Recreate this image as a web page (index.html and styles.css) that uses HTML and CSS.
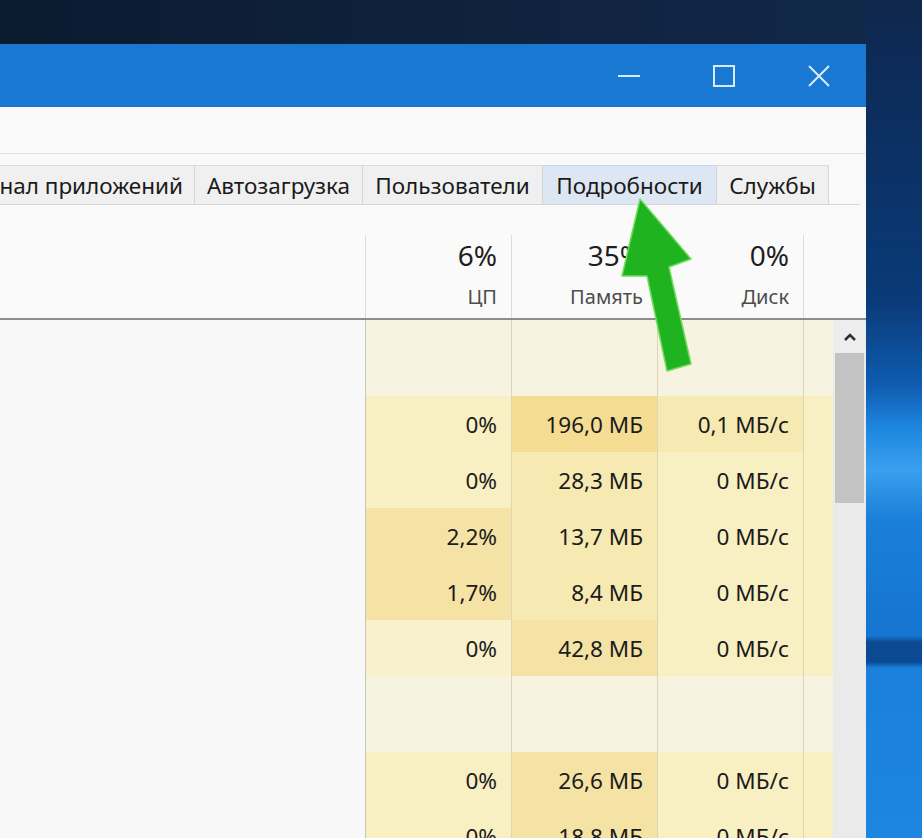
FILE: index.html
```html
<!DOCTYPE html>
<html lang="ru">
<head>
    <meta charset="UTF-8">
    <meta name="viewport" content="width=device-width, initial-scale=1.0">
    <title>Диспетчер задач</title>
    <link rel="stylesheet" href="styles.css">
</head>
<body>
    <div class="desktop">
        <div class="window">
            <div class="titlebar">
                <span class="ctl">
                    <svg width="24" height="24" viewBox="0 0 24 24"><line x1="1" y1="12" x2="23" y2="12"/></svg>
                </span>
                <span class="ctl">
                    <svg width="24" height="24" viewBox="0 0 24 24"><rect x="2" y="2" width="20" height="20"/></svg>
                </span>
                <span class="ctl">
                    <svg width="24" height="24" viewBox="0 0 24 24"><path d="M2 2 L22 22 M22 2 L2 22"/></svg>
                </span>
            </div>

            <div class="menubar"></div>

            <div class="tabs">
                <div class="tab tab-first">Журнал приложений</div>
                <div class="tab tab-w2">Автозагрузка</div>
                <div class="tab tab-w3">Пользователи</div>
                <div class="tab tab-w4 tab-hover">Подробности</div>
                <div class="tab tab-w5">Службы</div>
            </div>

            <div class="head">
                <div class="hcell hcell-name"></div>
                <div class="hcell"><span class="pct">6%</span><span class="lbl">ЦП</span></div>
                <div class="hcell"><span class="pct">35%</span><span class="lbl">Память</span></div>
                <div class="hcell"><span class="pct">0%</span><span class="lbl">Диск</span></div>
                <div class="hcell hcell-last"></div>
            </div>

            <div class="body">
                <div class="rows">
                    <div class="row group">
                        <div class="cell name"></div>
                        <div class="cell"></div>
                        <div class="cell"></div>
                        <div class="cell"></div>
                        <div class="cell"></div>
                    </div>
                    <div class="row">
                        <div class="cell name"></div>
                        <div class="cell c0">0%</div>
                        <div class="cell c3">196,0 МБ</div>
                        <div class="cell c1">0,1 МБ/с</div>
                        <div class="cell c0"></div>
                    </div>
                    <div class="row">
                        <div class="cell name"></div>
                        <div class="cell c0">0%</div>
                        <div class="cell c1">28,3 МБ</div>
                        <div class="cell c0">0 МБ/с</div>
                        <div class="cell c0"></div>
                    </div>
                    <div class="row">
                        <div class="cell name"></div>
                        <div class="cell c2">2,2%</div>
                        <div class="cell c1">13,7 МБ</div>
                        <div class="cell c0">0 МБ/с</div>
                        <div class="cell c0"></div>
                    </div>
                    <div class="row">
                        <div class="cell name"></div>
                        <div class="cell c2">1,7%</div>
                        <div class="cell c1">8,4 МБ</div>
                        <div class="cell c0">0 МБ/с</div>
                        <div class="cell c0"></div>
                    </div>
                    <div class="row">
                        <div class="cell name"></div>
                        <div class="cell c00">0%</div>
                        <div class="cell c2">42,8 МБ</div>
                        <div class="cell c0">0 МБ/с</div>
                        <div class="cell c0"></div>
                    </div>
                    <div class="row group">
                        <div class="cell name"></div>
                        <div class="cell"></div>
                        <div class="cell"></div>
                        <div class="cell"></div>
                        <div class="cell"></div>
                    </div>
                    <div class="row">
                        <div class="cell name"></div>
                        <div class="cell c0">0%</div>
                        <div class="cell c2">26,6 МБ</div>
                        <div class="cell c0">0 МБ/с</div>
                        <div class="cell c0"></div>
                    </div>
                    <div class="row">
                        <div class="cell name"></div>
                        <div class="cell c0">0%</div>
                        <div class="cell c2">18,8 МБ</div>
                        <div class="cell c0">0 МБ/с</div>
                        <div class="cell c0"></div>
                    </div>
                </div>

                <div class="scrollbar">
                    <div class="sb-up">
                        <svg width="14" height="10" viewBox="0 0 14 10"><path d="M2 8 L7 3 L12 8"/></svg>
                    </div>
                    <div class="sb-thumb"></div>
                </div>
            </div>
        </div>

        <div class="wallpaper"></div>

        <svg class="arrow" width="922" height="838" viewBox="0 0 922 838">
            <polygon points="640,199 691,259 669,267 691,364 667,371 647,276 622,276"/>
        </svg>
    </div>
</body>
</html>
```

FILE: styles.css
```css
body {
    margin: 0;
    font-family: "Noto Sans", "Open Sans", sans-serif;
    background: linear-gradient(to right, #0c1a2f, #12294b);
    overflow: hidden;
}
.desktop {
    display: flex;
    height: 838px;
    position: relative;
}
.window {
    flex: none;
    width: 866px;
    margin-top: 44px;
    background-color: #f9f9f9;
    display: flex;
    flex-direction: column;
    overflow: hidden;
}
.window > * {
    flex-shrink: 0;
}
.wallpaper {
    flex: 1;
    background: linear-gradient(to bottom,
        #10264a 0, #0d2a55 44px, #0a3a78 300px, #0f5cb0 385px,
        #1e88e0 430px, #3a9fee 470px, #1a7fd8 520px, #1575d0 636px,
        #0b4a92 642px, #0b4a92 662px, #1a80db 668px, #1c86e0 838px);
}

/* title bar */
.titlebar {
    height: 63px;
    background-color: #1878d2;
    display: flex;
    justify-content: flex-end;
}
.ctl {
    width: 95px;
    display: flex;
    align-items: center;
    justify-content: center;
}
.ctl svg {
    fill: none;
    stroke: #d6ebfb;
    stroke-width: 2;
}

.menubar {
    height: 46px;
    border-bottom: 1px solid #e1e1e1;
}

/* tabs */
.tabs {
    display: flex;
    margin: 11px 6px 0 0;
    border-bottom: 1px solid #d6d6d6;
}
.tab {
    box-sizing: border-box;
    height: 39px;
    display: flex;
    align-items: center;
    justify-content: center;
    background-color: #f0f0f0;
    border-top: 1px solid #dadada;
    border-right: 1px solid #d4d4d4;
    font-size: 22.5px;
    color: #1a1a1a;
    white-space: nowrap;
}
.tab-first {
    width: 195px;
    justify-content: flex-end;
    padding-right: 11px;
    overflow: hidden;
}
.tab-w2 { width: 168px; }
.tab-w3 { width: 180px; }
.tab-w4 { width: 174px; }
.tab-w5 { width: 112px; }
.tab-hover {
    background-color: #dde7f3;
    border-top-color: #c9d7e8;
}

/* column header */
.head {
    display: grid;
    grid-template-columns: 365px 146px 146px 146px 1fr;
    height: 113px;
    border-bottom: 2px solid #8c8c8c;
    background-color: #fafafa;
}
.hcell {
    margin-top: 30px;
    border-left: 1px solid #dcdcdc;
    display: flex;
    flex-direction: column;
    align-items: flex-end;
    padding-right: 14px;
}
.hcell-name {
    border-left: none;
}
.pct {
    font-size: 28px;
    line-height: 1;
    margin-top: 6px;
    color: #1e1e1e;
}
.lbl {
    font-size: 20px;
    line-height: 1;
    margin-top: 18px;
    color: #4d4d4d;
}

/* rows */
.body {
    flex: 1;
    display: flex;
}
.rows {
    flex: 1;
}
.row {
    display: grid;
    grid-template-columns: 365px 146px 146px 146px 1fr;
    height: 56px;
}
.row.group {
    height: 76px;
}
.cell {
    border-left: 1px solid #ddd5b4;
    display: flex;
    align-items: center;
    justify-content: flex-end;
    padding-right: 14px;
    font-size: 22.5px;
    color: #1b1b1b;
    background-color: #f7f3e1;
}
.cell.name {
    border-left: none;
    background-color: #f8f8f8;
}
.row > .cell:nth-child(2) {
    border-left-color: #c8c6bc;
}
.c00 { background-color: #f8f1cb; }
.c0 { background-color: #f8efc2; }
.c1 { background-color: #f6e9b2; }
.c2 { background-color: #f4e3a5; }
.c3 { background-color: #f4dc93; }

/* scrollbar */
.scrollbar {
    width: 33px;
    background-color: #eaeaea;
    display: flex;
    flex-direction: column;
}
.sb-up {
    height: 33px;
    display: flex;
    align-items: center;
    justify-content: center;
    background-color: #ededed;
}
.sb-up svg {
    fill: none;
    stroke: #2f2f2f;
    stroke-width: 2.5;
}
.sb-thumb {
    height: 150px;
    margin: 0 2px 0 2px;
    background-color: #c3c3c3;
}

/* annotation arrow */
.arrow {
    position: absolute;
    left: 0;
    top: 0;
    pointer-events: none;
}
.arrow polygon {
    fill: #1fb41f;
    stroke: #6fdc5f;
    stroke-width: 1.5;
    stroke-linejoin: round;
}
```
